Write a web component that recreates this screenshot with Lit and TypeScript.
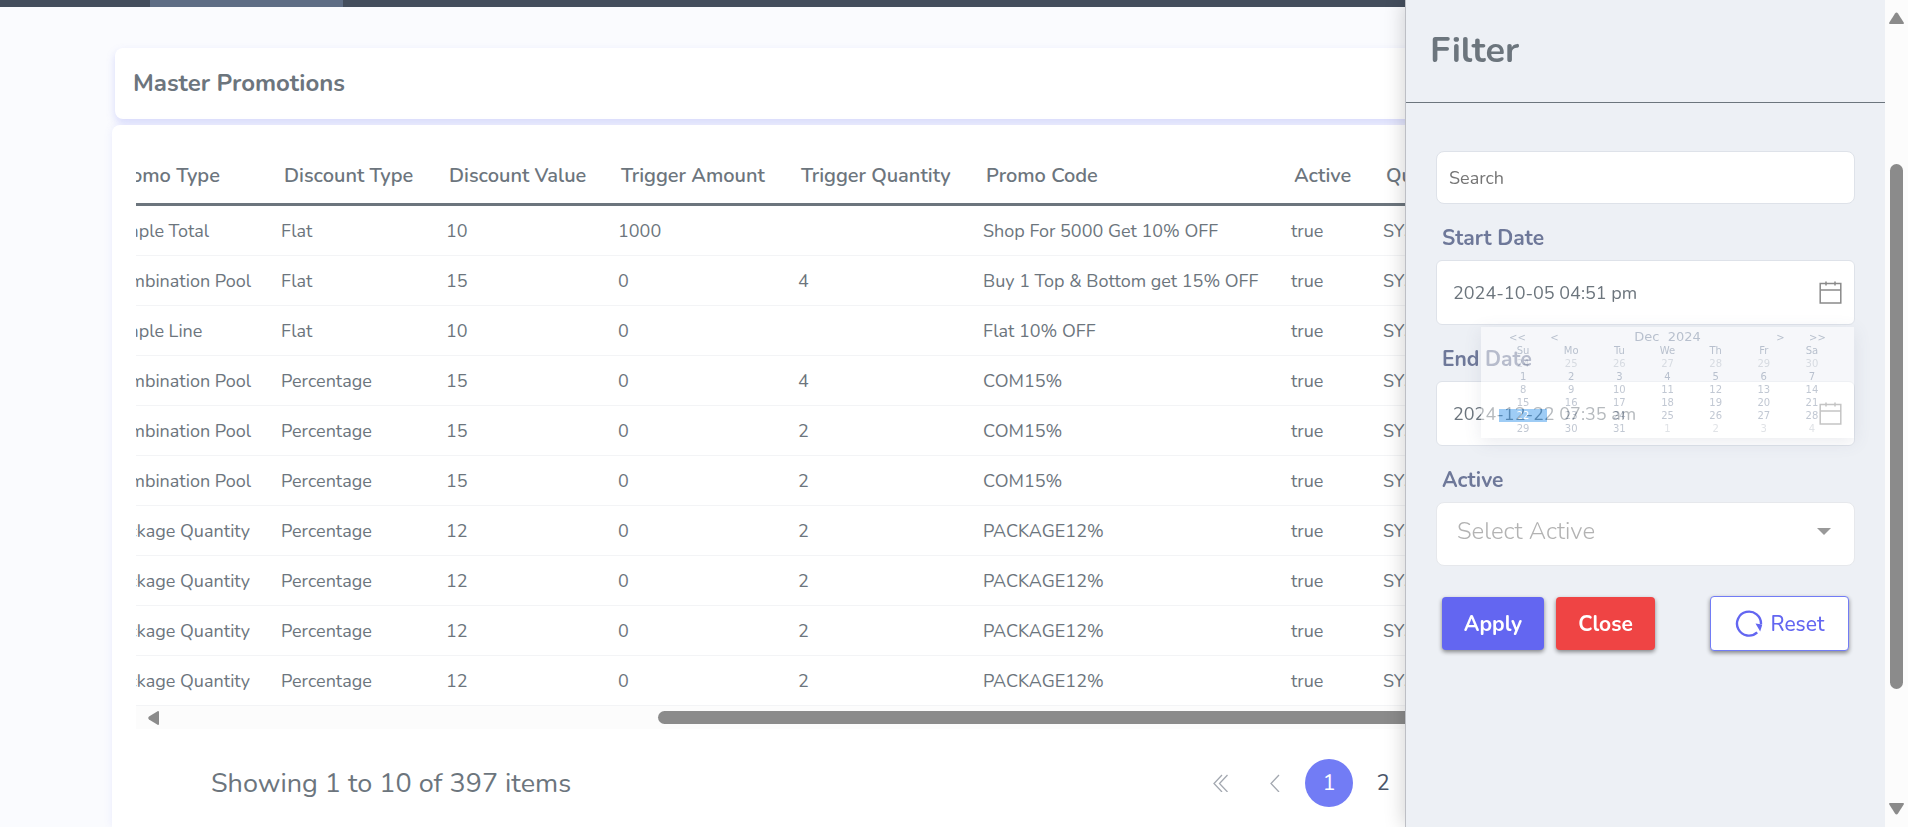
import { LitElement, html, css } from "lit";

interface Promo {
  type: string;
  discountType: string;
  value: string;
  amount: string;
  quantity: string;
  code: string;
}

const promo = (type: string, discountType: string, value: string, amount: string, quantity: string, code: string): Promo =>
  ({ type, discountType, value, amount, quantity, code });

const PROMOS: Promo[] = [
  promo("Simple Total", "Flat", "10", "1000", "", "Shop For 5000 Get 10% OFF"),
  promo("Combination Pool", "Flat", "15", "0", "4", "Buy 1 Top & Bottom get 15% OFF"),
  promo("Simple Line", "Flat", "10", "0", "", "Flat 10% OFF"),
  promo("Combination Pool", "Percentage", "15", "0", "4", "COM15%"),
  promo("Combination Pool", "Percentage", "15", "0", "2", "COM15%"),
  promo("Combination Pool", "Percentage", "15", "0", "2", "COM15%"),
  ...Array.from({ length: 4 }, () => promo("Package Quantity", "Percentage", "12", "0", "2", "PACKAGE12%")),
];

const HEADERS = ["Promo Type", "Discount Type", "Discount Value", "Trigger Amount", "Trigger Quantity", "Promo Code", "Active", "Qualifier"];

/* Width of the part of the first column that is scrolled out of view. */
const TABLE_SCROLL = 40;

class PromoTable extends LitElement {
  static styles = css`
    :host { display: block; }
    .scroller { overflow: hidden; }
    table { table-layout: fixed; width: calc(100% + 40px); border-collapse: separate; border-spacing: 0; color: #6c757d; }
    .w-type { width: 173px; }
    .w-dtype { width: 165px; }
    .w-value { width: 172px; }
    .w-amount { width: 180px; }
    .w-qty { width: 185px; }
    .w-code { width: 308px; }
    .w-active { width: 92px; }
    th { height: 56px; padding: 0 0 0 15px; border-bottom: 3px solid #6c757d; font-size: 20px; font-weight: 600; text-align: left; white-space: nowrap; }
    td { height: 49px; padding: 0 0 0 12px; border-bottom: 1px solid #f3f4f6; font-size: 18px; white-space: nowrap; }
    .bar { display: flex; align-items: center; height: 23px; background: #fcfcfc; }
    .arrow { flex: none; margin-left: 12px; }
    .track { flex: 1; display: flex; }
    .gap { flex: 314; }
    .thumb { flex: 664; height: 13px; border-radius: 7px; background: #8b8b8b; }
    .rest { flex: 22; }
  `;

  firstUpdated() {
    this.renderRoot.querySelector(".scroller")!.scrollLeft = TABLE_SCROLL;
  }

  render() {
    return html`
      <div class="scroller">
        <table>
          <colgroup>
            <col class="w-type" /><col class="w-dtype" /><col class="w-value" /><col class="w-amount" />
            <col class="w-qty" /><col class="w-code" /><col class="w-active" /><col />
          </colgroup>
          <thead><tr>${HEADERS.map((h) => html`<th scope="col">${h}</th>`)}</tr></thead>
          <tbody>
            ${PROMOS.map((p) => html`<tr>
              <td>${p.type}</td><td>${p.discountType}</td><td>${p.value}</td><td>${p.amount}</td>
              <td>${p.quantity}</td><td>${p.code}</td><td>true</td><td>SYSTEM</td>
            </tr>`)}
          </tbody>
        </table>
      </div>
      <div class="bar">
        <svg class="arrow" width="11" height="14" viewBox="0 0 11 14"><path d="M10 0Q11 0 11 1V13Q11 14 10 14L1 8.500Q-.5 7 1 5.500Z" fill="#8b8b8b" /></svg>
        <div class="track"><div class="gap"></div><div class="thumb"></div><div class="rest"></div></div>
      </div>
    `;
  }
}
customElements.define("promo-table", PromoTable);

const WEEKDAYS = ["Su", "Mo", "Tu", "We", "Th", "Fr", "Sa"];
const DAYS = [
  ...[24, 25, 26, 27, 28, 29, 30].map((n) => ({ n, kind: "out" })),
  ...Array.from({ length: 31 }, (_, i) => ({ n: i + 1, kind: i + 1 === 22 ? "picked" : "day" })),
  ...[1, 2, 3, 4].map((n) => ({ n, kind: "out" })),
];

class DateMenu extends LitElement {
  static styles = css`
    :host { display: block; box-sizing: border-box; padding: 0 18px 3px; background: #fff; opacity: 0.5; box-shadow: 0 4px 16px rgba(90, 100, 130, 0.25); font: 10px/13px "DejaVu Sans", sans-serif; color: #8592a8; }
    button { border: 0; padding: 0; background: none; font: inherit; color: inherit; text-align: center; }
    .head { display: grid; grid-template-columns: 37px 37px 1fr 37px 37px; height: 17px; padding-top: 3px; box-sizing: border-box; text-align: center; }
    .title { font-size: 13px; }
    .grid { display: grid; grid-template-columns: repeat(7, 1fr); grid-auto-rows: 13px; text-align: center; }
    .out { color: #c3c8d0; }
    .picked { background: #409bec; color: #fff; }
  `;

  render() {
    return html`
      <div class="head">
        <button aria-label="Previous year">&lt;&lt;</button><button aria-label="Previous month">&lt;</button>
        <span class="title">Dec&nbsp; 2024</span>
        <button aria-label="Next month">&gt;</button><button aria-label="Next year">&gt;&gt;</button>
      </div>
      <div class="grid">
        ${WEEKDAYS.map((d) => html`<span>${d}</span>`)}
        ${DAYS.map((d) => html`<button class=${d.kind}>${d.n}</button>`)}
      </div>
    `;
  }
}
customElements.define("date-menu", DateMenu);

class FilterDrawer extends LitElement {
  static styles = css`
    :host { display: block; box-sizing: border-box; border-left: 1px solid #bdbfc5; background: #edf0f5; box-shadow: 0 0 20px rgba(0, 0, 0, 0.2); }
    * { box-sizing: border-box; }
    header { height: 103px; padding: 26px 24px 0; border-bottom: 1px solid #6c757d; }
    h2 { margin: 0; font-size: 36px; line-height: 50px; font-weight: 700; color: #6c757d; }
    form { padding: 48px 30px 0 30px; }
    input, select { display: block; width: 100%; border: 1px solid #dee2e9; background: #fff; font-family: inherit; outline: 0; }
    .search { height: 53px; padding: 0 12px; border-radius: 8px; font-size: 18px; }
    .search::placeholder { color: #757575; opacity: 1; }
    label { display: block; margin: 20px 6px 8px; font-size: 21px; line-height: 28px; font-weight: 700; color: #6e7899; }
    .field { position: relative; }
    .date { height: 65px; padding: 0 56px 0 16px; border-radius: 6px; font-size: 18px; color: #6c757d; }
    .pick { position: absolute; right: 13px; top: 21px; width: 23px; height: 23px; padding: 0; border: 0; background: none; }
    .pick svg, .caret { display: block; }
    date-menu { position: absolute; z-index: 2; top: calc(100% + 2px); left: 45px; right: 1px; }
    select { appearance: none; height: 64px; padding: 0 48px 7px 20px; border-color: #e6e8ec; border-radius: 8px; font-size: 24px; font-weight: 300; color: #b3b3b3; }
    .caret { position: absolute; right: 24px; top: 26px; pointer-events: none; }
    .actions { display: flex; align-items: center; gap: 12px; margin-top: 30px; padding: 0 6px; }
    .actions button { height: 53px; padding: 0; border: 0; border-radius: 4px; font: 700 21px/24px Nunito, "Noto Sans", sans-serif; color: #fff; box-shadow: 0 2px 4px rgba(0, 0, 0, 0.45); }
    .actions .apply { width: 102px; background: #6366f1; }
    .actions .close { width: 99px; background: #ef4444; }
    .actions .reset { display: flex; align-items: center; justify-content: center; gap: 8px; width: 139px; height: 55px; margin-left: auto; border: 1px solid #727cf5; background: #fff; color: #6366f1; font-weight: 500; }
  `;

  private icon() {
    return html`<svg width="23" height="23" viewBox="0 0 23 23" fill="none" stroke="#8a8a8a" stroke-width="1.500">
      <path d="M1.200 2.500H21.800V22H1.200ZM1.200 9H21.800M7 .5V4.500M16 .5V4.500" />
    </svg>`;
  }

  render() {
    return html`
      <header><h2>Filter</h2></header>
      <form>
        <input class="search" type="text" placeholder="Search" aria-label="Search" />
        <label for="start">Start Date</label>
        <div class="field">
          <input class="date" id="start" type="text" .value=${"2024-10-05 04:51 pm"} />
          <button class="pick" type="button" aria-label="Pick start date">${this.icon()}</button>
          <date-menu></date-menu>
        </div>
        <label for="end">End Date</label>
        <div class="field">
          <input class="date" id="end" type="text" .value=${"2024-12-22 07:35 am"} />
          <button class="pick" type="button" aria-label="Pick end date">${this.icon()}</button>
        </div>
        <label for="active">Active</label>
        <div class="field">
          <select id="active"><option>Select Active</option></select>
          <svg class="caret" width="14" height="7" viewBox="0 0 14 7"><path d="M0 0H14L7 7Z" fill="#999" /></svg>
        </div>
        <div class="actions">
          <button class="apply" type="button">Apply</button>
          <button class="close" type="button">Close</button>
          <button class="reset" type="button">
            <svg width="28" height="28" viewBox="0 0 28 28" fill="none">
              <path d="M22.200 22.400A12 12 0 1 1 26 14" stroke="#6366f1" stroke-width="2.400" />
              <path d="M20.500 13.500L27.300 14.600L25.200 21.400Z" fill="#6366f1" />
            </svg>
            Reset
          </button>
        </div>
      </form>
    `;
  }
}
customElements.define("filter-drawer", FilterDrawer);

class AppRoot extends LitElement {
  static styles = css`
    :host { display: flex; height: 100vh; overflow: hidden; background: #fafbfe; font-family: Nunito, "Noto Sans", sans-serif; color: #6c757d; }
    * { box-sizing: border-box; }
    .page { flex: 1; min-width: 0; display: flex; flex-direction: column; }
    nav { flex: none; display: flex; height: 7px; padding-left: 150px; background: #444e5d; }
    nav a { width: 193px; background: #5e6d85; }
    .title { flex: none; height: 71px; margin: 41px 112px 0 115px; padding: 0 18px 2px; border-radius: 8px; background: #fff; box-shadow: 0 4px 8px rgba(114, 124, 245, 0.25); display: flex; align-items: center; }
    h1 { margin: 0; font-size: 24px; font-weight: 700; }
    .card { position: relative; flex: 1; margin: 6px 112px 0; padding: 22px 24px 0; border-radius: 8px 8px 0 0; background: #fff; box-shadow: 0 0 8px rgba(114, 124, 245, 0.12); }
    footer { display: flex; justify-content: space-between; align-items: center; margin-top: 30px; padding: 0 72px 0 75px; font-size: 27px; }
    .pages { display: flex; gap: 6px; }
    .pages button { display: flex; align-items: center; justify-content: center; width: 48px; height: 48px; padding: 0; border: 0; border-radius: 24px; background: none; font: 400 22px/24px Nunito, "Noto Sans", sans-serif; color: #4a5568; }
    .pages .current { background: #727cf5; color: #fff; }
    .scrollbar { position: relative; z-index: 6; flex: none; width: 23px; display: flex; flex-direction: column; align-items: center; padding: 12px 0; background: #fcfcfc; }
    .gap { flex: 140; }
    .thumb { flex: 525; width: 13px; border-radius: 7px; background: #8b8b8b; }
    .rest { flex: 114; }
    filter-drawer { position: fixed; z-index: 5; top: 0; bottom: 0; right: 23px; width: 480px; }
  `;

  private chevrons(d: string) {
    return html`<svg width="18" height="18" viewBox="0 0 18 18" fill="none" stroke="#a3a8b0" stroke-width="1.300"><path d=${d} /></svg>`;
  }

  render() {
    return html`
      <div class="page">
        <nav><a href="#" aria-label="Promotions"></a></nav>
        <section class="title"><h1>Master Promotions</h1></section>
        <section class="card">
          <promo-table></promo-table>
          <footer>
            <span>Showing 1 to 10 of 397 items</span>
            <div class="pages">
              <button aria-label="First page">${this.chevrons("M10 1L2 9.500L10 18M15.500 1L7.500 9.500L15.500 18")}</button>
              <button aria-label="Previous page">${this.chevrons("M13 1L5 9.500L13 18")}</button>
              ${[1, 2, 3, 4, 5].map((n) => html`<button class=${n === 1 ? "current" : ""}>${n}</button>`)}
              <button aria-label="Next page">${this.chevrons("M5 1L13 9.500L5 18")}</button>
              <button aria-label="Last page">${this.chevrons("M8 1L16 9.500L8 18M2.500 1L10.500 9.500L2.500 18")}</button>
            </div>
          </footer>
        </section>
      </div>
      <div class="scrollbar">
        <svg width="15" height="12" viewBox="0 0 15 12"><path d="M0 11Q0 12 1 12H14Q15 12 15 11L9 1.500Q7.500 -.5 6 1.500Z" fill="#8b8b8b" /></svg>
        <div class="gap"></div><div class="thumb"></div><div class="rest"></div>
        <svg width="15" height="12" viewBox="0 0 15 12"><path d="M0 1Q0 0 1 0H14Q15 0 15 1L9 10.500Q7.500 12.500 6 10.500Z" fill="#8b8b8b" /></svg>
      </div>
      <filter-drawer></filter-drawer>
    `;
  }
}
customElements.define("app-root", AppRoot);
